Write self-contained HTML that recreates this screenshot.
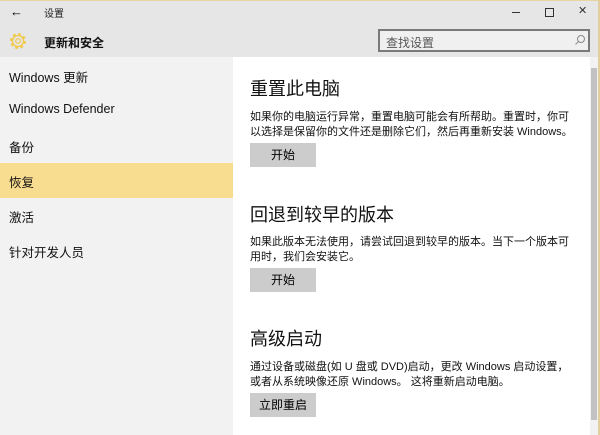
<!DOCTYPE html>
<html><head><meta charset="utf-8"><style>
*{margin:0;padding:0;box-sizing:border-box}
body{width:600px;height:435px;overflow:hidden;font-family:"Liberation Sans","Noto Sans CJK SC",sans-serif;color:#000;background:#fff;position:relative}
.a{position:absolute;white-space:nowrap}
#top{left:0;top:0;width:600px;height:57px;background:#e6e6e6;border-top:1px solid #e8d6a0}
#side{left:0;top:57px;width:233px;height:378px;background:#f2f2f2}
#sel{left:0;top:163px;width:233px;height:35px;background:#f8dc8f}
.si{left:9px;font-size:12.5px;color:#111}
.h{left:250px;font-size:18px;color:#111}
.p{left:250px;font-size:11px;letter-spacing:0px;line-height:15px;color:#111}
.b{left:250px;width:66px;height:24px;background:#ccc;font-size:12px;text-align:center;line-height:24px}
#search{left:378px;top:29px;width:212px;height:23px;border:2px solid #7a7a7a;background:#f0f0f0;font-size:12px;color:#555;padding:3px 0 0 6px}
#sb{left:590px;top:57px;width:8px;height:378px;background:#f2f2f2}
#th{left:591px;top:68px;width:6px;height:352px;background:#c2c2c2}
</style></head><body>
<div class="a" id="top"></div>
<div class="a" style="left:10px;top:4px;font-size:13px">←</div>
<div class="a" style="left:44px;top:5px;font-size:10px;color:#222">设置</div>
<div class="a" style="left:512px;top:12px;width:8px;height:1px;background:#333"></div>
<div class="a" style="left:545px;top:8px;width:9px;height:9px;border:1px solid #333"></div>
<div class="a" style="left:578px;top:4px;font-size:11px;color:#333">✕</div>
<svg class="a" style="left:8px;top:31px" width="20" height="20" viewBox="0 0 20 20"><circle cx="10" cy="10" r="6.5" fill="none" stroke="#f0c84a" stroke-width="3" stroke-dasharray="2.6 2.5"/><circle cx="10" cy="10" r="5.5" fill="none" stroke="#f0c84a" stroke-width="1.3"/><circle cx="10" cy="10" r="2.3" fill="none" stroke="#f0c84a" stroke-width="1.2"/></svg>
<div class="a" style="left:44px;top:34px;font-size:12px;font-weight:bold;color:#111">更新和安全</div>
<div class="a" id="search">查找设置</div>
<svg class="a" style="left:574px;top:34px" width="12" height="12" viewBox="0 0 12 12"><circle cx="7" cy="5" r="3.5" fill="none" stroke="#888"/><line x1="4.5" y1="7.5" x2="1.5" y2="10.5" stroke="#888"/></svg>
<div class="a" id="side"></div>
<div class="a" id="sel"></div>
<div class="a si" style="top:67px">Windows 更新</div>
<div class="a si" style="top:102px">Windows Defender</div>
<div class="a si" style="top:137px">备份</div>
<div class="a si" style="top:172px">恢复</div>
<div class="a si" style="top:207px">激活</div>
<div class="a si" style="top:242px">针对开发人员</div>
<div class="a h" style="top:75px">重置此电脑</div>
<div class="a p" style="top:110px">如果你的电脑运行异常，重置电脑可能会有所帮助。重置时，你可<br>以选择是保留你的文件还是删除它们，然后再重新安装 Windows。</div>
<div class="a b" style="top:143px">开始</div>
<div class="a h" style="top:201px">回退到较早的版本</div>
<div class="a p" style="top:235px">如果此版本无法使用，请尝试回退到较早的版本。当下一个版本可<br>用时，我们会安装它。</div>
<div class="a b" style="top:268px">开始</div>
<div class="a h" style="top:325px">高级启动</div>
<div class="a p" style="top:360px">通过设备或磁盘(如 U 盘或 DVD)启动，更改 Windows 启动设置，<br>或者从系统映像还原 Windows。 这将重新启动电脑。</div>
<div class="a b" style="top:393px">立即重启</div>
<div class="a" id="sb"></div>
<div class="a" id="th"></div>
<div class="a" style="left:598px;top:0;width:2px;height:435px;background:#e2cfa0"></div>
</body></html>
